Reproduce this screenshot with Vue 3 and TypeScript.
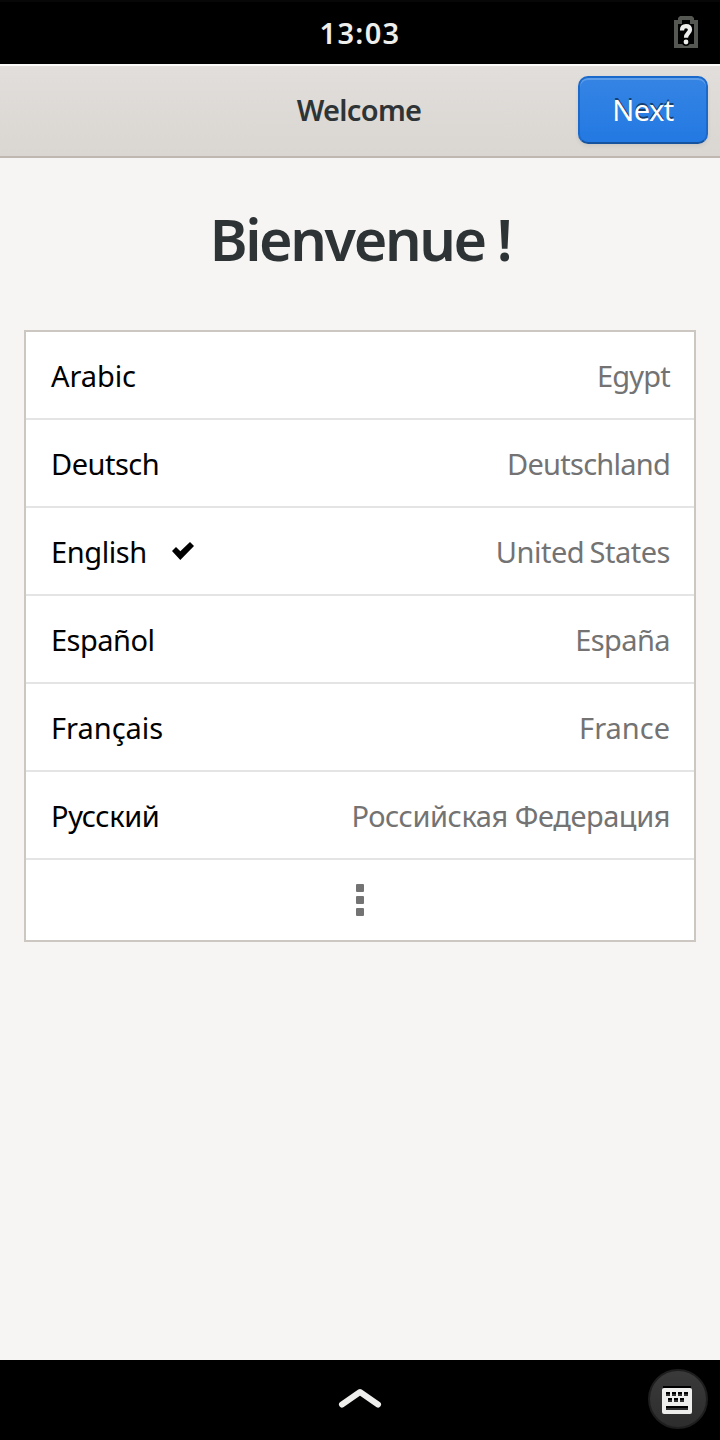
<script setup lang="ts">
interface Locale {
  id: string
  language: string
  country: string
  selected?: boolean
}

const locales: Locale[] = [
  { id: 'ar', language: 'Arabic', country: 'Egypt' },
  { id: 'de', language: 'Deutsch', country: 'Deutschland' },
  { id: 'en', language: 'English', country: 'United States', selected: true },
  { id: 'es', language: 'Español', country: 'España' },
  { id: 'fr', language: 'Français', country: 'France' },
  { id: 'ru', language: 'Русский', country: 'Российская Федерация' },
]
</script>

<template>
  <div class="screen">
    <header class="topbar">
      <span></span>
      <span class="clock">13:03</span>
      <svg class="battery" width="24" height="32" viewBox="0 0 24 32">
        <path d="M6 0H18L20 2V4H24V32H0V4H4V2Z" fill="#555753" />
        <path d="M8 4H16V8H20V28H4V8H8Z" fill="#000" />
        <circle cx="12" cy="26" r="4" fill="#000" />
        <path d="M8 14.4C8 11 9.6 10.2 12 10.2C14.6 10.2 16 11.6 16 13.8C16 17 12 17.2 12 21.8" fill="none" stroke="#eeeeec" stroke-width="4.2" />
        <circle cx="12" cy="26" r="2.4" fill="#eeeeec" />
      </svg>
    </header>
    <div class="headerbar">
      <span></span>
      <span class="title">Welcome</span>
      <button class="next"><span>Next</span></button>
    </div>
    <main class="content">
      <h1 class="greeting">Bienvenue<span class="mark">!</span></h1>
      <ul class="list">
        <li v-for="l in locales" :key="l.id" class="row">
          <span class="language" :class="'lang-' + l.id">{{ l.language }}</span>
          <svg v-if="l.selected" class="check" width="24" height="20" viewBox="0 0 24 20">
            <path d="M1 10L5 6L9.3 10.2L19 1L23 5L9.3 19Z" fill="#000" />
          </svg>
          <span class="country" :class="'country-' + l.id">{{ l.country }}</span>
        </li>
        <li class="more"><i></i><i></i><i></i></li>
      </ul>
    </main>
    <footer class="bottombar">
      <span></span>
      <svg class="chevron" width="44" height="24" viewBox="0 0 44 24">
        <path d="M4 18.5L22 6L40 18.5" fill="none" stroke="#eeeeec" stroke-width="6" stroke-linecap="round" stroke-linejoin="round" />
      </svg>
      <button class="keyboard">
        <svg width="30" height="28" viewBox="0 0 30 28">
          <path d="M1 0H29V4H1Z" fill="#000" />
          <rect y="2" width="30" height="26" rx="2" fill="#eeeeec" />
          <path d="M4 6h4v4h-4zM10 6h4v4h-4zM16 6h4v4h-4zM22 6h4v4h-4zM6 12h4v4h-4zM12 12h4v4h-4zM18 12h4v4h-4zM4 20h22v4h-22z" fill="#303030" />
          <path d="M4 6h4v2h-4zM10 6h4v2h-4zM16 6h4v2h-4zM22 6h4v2h-4zM6 12h4v2h-4zM12 12h4v2h-4zM18 12h4v2h-4zM4 20h22v2h-22z" fill="#000" />
        </svg>
      </button>
    </footer>
  </div>
</template>

<style>
body { margin: 0; }
</style>

<style scoped>
.screen {
  width: 720px;
  height: 1440px;
  display: flex;
  flex-direction: column;
  background: #f6f5f3;
  font-family: "Noto Sans", "Open Sans", sans-serif;
  font-size: 29px;
  color: #000;
  overflow: hidden;
}
.topbar {
  height: 64px;
  box-sizing: border-box;
  display: grid;
  grid-template-columns: 1fr auto 1fr;
  align-items: center;
  padding: 0 22px 2px;
  background: #000;
  border-top: 2px solid #070707;
}
.clock {
  color: #eeeeec;
  font-weight: 600;
  line-height: 40px;
  letter-spacing: 1.3px;
  padding-top: 2px;
}
.battery { justify-self: end; }
.headerbar {
  height: 94px;
  box-sizing: border-box;
  display: grid;
  grid-template-columns: 1fr auto 1fr;
  align-items: center;
  padding: 0 12px 2px;
  border-top: 2px solid #fafaf9;
  border-bottom: 2px solid #bfb8b1;
  background: linear-gradient(#e1dedb, #dad6d2);
}
.title {
  font-weight: 600;
  color: #2e3436;
  line-height: 40px;
  letter-spacing: -0.7px;
  padding-right: 2px;
}
.next {
  justify-self: end;
  width: 130px;
  height: 68px;
  padding: 0 0 2px;
  border: 2px solid #1b6acb;
  border-bottom-color: #15539e;
  border-radius: 10px;
  background: linear-gradient(#3584e4, #2379e2);
  box-shadow: inset 0 2px #5d9de9, 0 2px 4px rgba(0, 0, 0, 0.07);
  color: #fff;
  font: inherit;
  letter-spacing: -0.5px;
  text-shadow: 0 -2px rgba(0, 0, 0, 0.5);
}
.content {
  flex: 1;
  padding: 0 24px;
}
.greeting {
  margin: 0;
  height: 172px;
  display: flex;
  justify-content: center;
  gap: 12px;
  font-size: 57.5px;
  font-weight: 600;
  line-height: 162px;
  letter-spacing: -2.4px;
  color: #2e3436;
}
.list {
  list-style: none;
  margin: 0;
  padding: 0;
  border: 2px solid #cdc7c2;
  background: #fff;
}
.row {
  height: 88px;
  box-sizing: border-box;
  display: flex;
  align-items: center;
  padding: 0 24px;
  border-bottom: 2px solid #e4e4e4;
}
.language { margin-left: 1px; }
.lang-ar { letter-spacing: -0.1px; }
.lang-de { letter-spacing: -0.5px; }
.lang-en { letter-spacing: -0.4px; }
.lang-es { letter-spacing: -0.5px; }
.lang-ru { letter-spacing: -0.4px; }
.check { margin-left: 24px; }
.country {
  margin-left: auto;
  color: #737373;
}
.country-ar { letter-spacing: -0.8px; }
.country-de { letter-spacing: -0.75px; }
.country-en { letter-spacing: -0.5px; word-spacing: -1.5px; }
.country-es { letter-spacing: -0.6px; }
.country-ru { letter-spacing: -0.45px; }
.more {
  height: 80px;
  display: flex;
  flex-direction: column;
  align-items: center;
  justify-content: center;
  gap: 4px;
}
.more i {
  width: 8px;
  height: 8px;
  border-radius: 1px;
  background: #737373;
}
.bottombar {
  height: 80px;
  box-sizing: border-box;
  display: grid;
  grid-template-columns: 1fr auto 1fr;
  align-items: center;
  padding: 0 12px 2px;
  background: #000;
}
.chevron { margin-bottom: 2px; }
.keyboard {
  justify-self: end;
  box-sizing: border-box;
  width: 60px;
  height: 60px;
  padding: 0 2px 0 0;
  display: flex;
  align-items: center;
  justify-content: center;
  border: 2px solid #1e1e1e;
  border-radius: 50%;
  background: linear-gradient(#3a3a3a, #2d2d2d);
}
.keyboard svg { margin-top: 2px; }
</style>
